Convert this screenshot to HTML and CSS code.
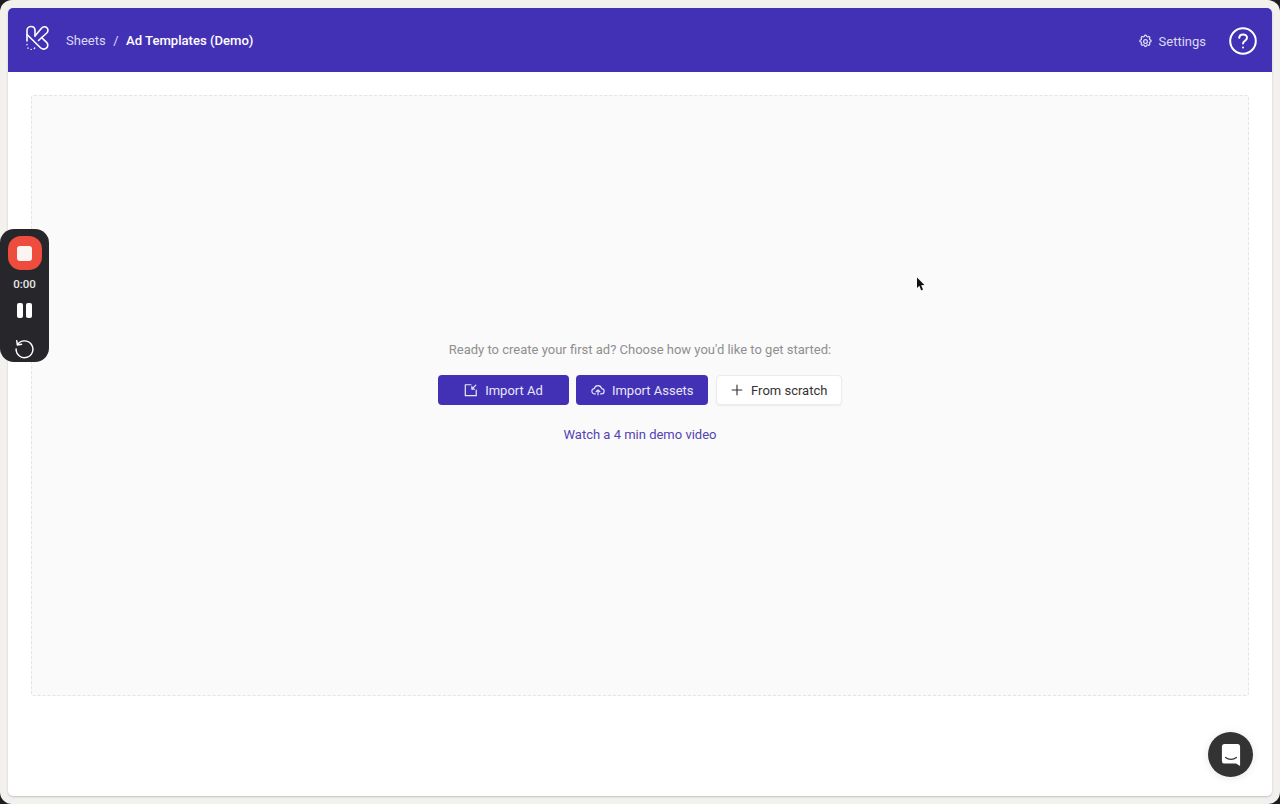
FILE: index.html
```html
<!DOCTYPE html>
<html>

<head>
    <meta charset="utf-8">
    <title>Ad Templates (Demo)</title>
    <link rel="stylesheet" href="styles.css">
</head>

<body>
    <div class="frame">
        <div class="window">
            <header class="topbar">
                <div class="topbar-left">
                    <svg class="logo" viewBox="0 0 24 26" fill="none" stroke="#fff" stroke-width="1.6" stroke-linecap="round" stroke-linejoin="round">
                        <path d="M2 16V5.5C2 3 4 1.5 6 1.5C8.5 1.5 10 3.2 10 5.5V11"/>
                        <path d="M10 11L16.5 3.2C18 1.6 20.5 1.4 22 2.8C23.4 4.2 23.2 6.6 21.8 8L13.5 15.5"/>
                        <path d="M2 9.5L15.5 22.8C17 24.4 19.8 24.6 21.4 23.2C23.2 21.6 23.2 19 21.6 17.4L16.5 12.5"/>
                        <path d="M2 19.5v.3M3 23v.3M6 24.3h.3M9.3 23.5l.4-.5" stroke-width="1.3"/>
                    </svg>
                    <nav class="crumbs">
                        <span>Sheets</span>
                        <span class="crumb-sep">/</span>
                        <strong>Ad Templates (Demo)</strong>
                    </nav>
                </div>
                <div class="topbar-right">
                    <a class="settings-link">
                        <svg class="settings-icon" viewBox="0 0 24 24" fill="none" stroke="currentColor" stroke-width="2" stroke-linecap="round" stroke-linejoin="round">
                            <path d="M10.3 3.2c.4-1.7 3-1.7 3.4 0a1.7 1.7 0 0 0 2.6 1.1c1.5-.9 3.3.8 2.4 2.4a1.7 1.7 0 0 0 1 2.6c1.8.4 1.8 3 0 3.4a1.7 1.7 0 0 0-1 2.6c.9 1.5-.9 3.3-2.4 2.4a1.7 1.7 0 0 0-2.6 1c-.4 1.8-3 1.8-3.4 0a1.7 1.7 0 0 0-2.6-1c-1.5.9-3.3-.9-2.4-2.4a1.7 1.7 0 0 0-1-2.6c-1.8-.4-1.8-3 0-3.4a1.7 1.7 0 0 0 1-2.6c-.9-1.6.9-3.3 2.4-2.4a1.7 1.7 0 0 0 2.6-1.1z"/>
                            <circle cx="12" cy="12" r="3"/>
                        </svg>
                        Settings
                    </a>
                    <svg class="help-icon" viewBox="0 0 28 28" fill="none" stroke="#fff" stroke-width="2" stroke-linecap="round">
                        <circle cx="14" cy="14" r="12.8"/>
                        <path d="M10.2 10.8C10.4 8.6 12 7.4 14 7.4C16.2 7.4 18 8.8 18 10.8C18 13.6 14 13.8 14 16.6"/>
                        <path d="M14 20.4v.2"/>
                    </svg>
                </div>
            </header>

            <main class="content">
                <section class="dropzone">
                    <p class="prompt">Ready to create your first ad? Choose how you'd like to get started:</p>
                    <div class="actions">
                        <button class="btn btn-primary btn-ad">
                            <svg class="btn-icon" viewBox="0 0 16 16" fill="none" stroke="currentColor" stroke-width="1.4" stroke-linecap="round" stroke-linejoin="round">
                                <path d="M8 2H1.5v12.5H14V8"/>
                                <path d="M13.5 2.5L9 7M9 4.2V7H11.8"/>
                            </svg>
                            Import Ad
                        </button>
                        <button class="btn btn-primary btn-assets">
                            <svg class="btn-icon" viewBox="0 0 16 16" fill="none" stroke="currentColor" stroke-width="1.3" stroke-linecap="round" stroke-linejoin="round">
                                <path d="M5 12.5H4.2C2.4 12.5 1 11.1 1 9.4C1 7.8 2.2 6.5 3.8 6.4C4.3 4.4 6 3 8 3C10 3 11.7 4.4 12.2 6.4C13.8 6.5 15 7.8 15 9.4C15 11.1 13.6 12.5 11.8 12.5H11"/>
                                <path d="M8 13.5V8M5.8 10L8 7.8L10.2 10"/>
                            </svg>
                            Import Assets
                        </button>
                        <button class="btn btn-plain">
                            <svg class="btn-icon" viewBox="0 0 16 16" fill="none" stroke="currentColor" stroke-width="1.3" stroke-linecap="round">
                                <path d="M8 2.5v11M2.5 8h11"/>
                            </svg>
                            From scratch
                        </button>
                    </div>
                    <a class="demo-link">Watch a 4 min demo video</a>
                </section>
            </main>
        </div>
    </div>

    <div class="recorder">
        <div class="rec-stop"><span></span></div>
        <div class="rec-time">0:00</div>
        <div class="rec-pause"><span></span><span></span></div>
        <svg class="rec-restart" viewBox="0 0 20 20" fill="none" stroke="#fff" stroke-width="1.4" stroke-linecap="round" stroke-linejoin="round">
            <path d="M3.4 6.2A8 8 0 1 1 2 10.5"/>
            <path d="M2.6 2.6L3.2 6.6L7.2 6"/>
        </svg>
    </div>

    <svg class="cursor" viewBox="0 0 10 15">
        <path d="M1 0.5V11L3.4 8.8L5.2 13.4L7 12.6L5.1 8.2L8.4 8Z" fill="#111"/>
    </svg>

    <div class="chat-bubble">
        <svg viewBox="0 0 22 24" preserveAspectRatio="none">
            <path d="M3.5 1H18.5A2.5 2.5 0 0 1 21 3.5V23L16.5 20.5H3.5A2.5 2.5 0 0 1 1 18V3.5A2.5 2.5 0 0 1 3.5 1Z" fill="#fff"/>
            <path d="M5 14.5C8.5 17 13.5 17 17 14.5" fill="none" stroke="#333" stroke-width="1.3" stroke-linecap="round"/>
        </svg>
    </div>
</body>

</html>
```

FILE: styles.css
```css
* {
    box-sizing: border-box;
}

html,
body {
    margin: 0;
    height: 100%;
    overflow: hidden;
    background-color: #1d1d1f;
    font-family: Roboto, "Liberation Sans", sans-serif;
}

.frame {
    height: 100%;
    padding: 8px;
    background-color: #f2f1ed;
    border-radius: 12px;
}

.window {
    display: flex;
    flex-direction: column;
    height: 100%;
    background-color: white;
    border-radius: 5px;
    overflow: hidden;
    box-shadow: 0 1px 2px rgba(0, 0, 0, 0.2);
}

.topbar {
    display: flex;
    justify-content: space-between;
    align-items: center;
    flex: none;
    height: 64px;
    padding: 0 15px 0 17px;
    background-color: #4331b5;
    color: white;
}

.topbar-left {
    display: flex;
    align-items: center;
    gap: 17px;
}

.logo {
    width: 24px;
    height: 26px;
    margin-top: -4px;
}

.crumbs {
    display: flex;
    gap: 7.5px;
    margin-top: 1px;
    font-size: 13px;
    color: #dcd9f3;
}

.crumbs strong {
    font-size: 13.1px;
    font-weight: 500;
    color: white;
}

.topbar-right {
    display: flex;
    align-items: center;
    gap: 23px;
    margin-top: 2px;
}

.settings-link {
    display: flex;
    align-items: center;
    gap: 6px;
    font-size: 13px;
    color: #dcd9f3;
}

.settings-icon {
    width: 15px;
    height: 15px;
    margin-left: -1px;
}

.help-icon {
    width: 28px;
    height: 28px;
}

.content {
    flex: 1;
    padding: 23px 23px 100px;
}

.dropzone {
    display: flex;
    flex-direction: column;
    align-items: center;
    justify-content: center;
    height: 601px;
    padding-bottom: 6px;
    background-color: #fafafa;
    border: 1px dashed #e4e4e4;
    border-radius: 3px;
}

.prompt {
    margin: 0 0 16px;
    font-size: 13px;
    line-height: 18px;
    color: #8f8f8f;
}

.actions {
    display: flex;
    gap: 7.5px;
    margin-bottom: 21px;
}

.btn {
    display: flex;
    align-items: center;
    justify-content: center;
    gap: 7px;
    height: 30px;
    border-radius: 4px;
    border: none;
    font-family: inherit;
    font-size: 13px;
    cursor: pointer;
}

.btn-primary {
    background-color: #4331b5;
    color: #e8e6f8;
}

.btn-ad {
    width: 130.5px;
}

.btn-assets {
    width: 132px;
}

.btn-plain {
    width: 126px;
    background-color: white;
    border: 1px solid #ececec;
    box-shadow: 0 1px 2px rgba(0, 0, 0, 0.06);
    color: #333;
}

.btn-icon {
    width: 14px;
    height: 14px;
}

.demo-link {
    font-size: 13px;
    line-height: 18px;
    color: #5443b4;
}

.recorder {
    position: absolute;
    top: 229px;
    left: 0;
    display: flex;
    flex-direction: column;
    align-items: center;
    width: 49px;
    height: 133px;
    padding-top: 7px;
    background-color: #26262b;
    border-radius: 14px;
}

.rec-stop {
    display: flex;
    align-items: center;
    justify-content: center;
    width: 34px;
    height: 34px;
    background-color: #ee4c3c;
    border-radius: 13px;
}

.rec-stop span {
    width: 15px;
    height: 15px;
    background-color: #fdf3f1;
    border-radius: 3px;
}

.rec-time {
    margin-top: 8px;
    font-size: 11.5px;
    font-weight: 500;
    line-height: 13px;
    color: #e6e6e6;
}

.rec-pause {
    display: flex;
    gap: 3px;
    margin-top: 12px;
}

.rec-pause span {
    width: 6px;
    height: 15px;
    background-color: white;
    border-radius: 2px;
}

.rec-restart {
    width: 21px;
    height: 21px;
    margin-top: 20px;
}

.cursor {
    position: absolute;
    top: 277px;
    left: 916px;
    width: 10px;
    height: 15px;
}

.chat-bubble {
    position: absolute;
    top: 732px;
    left: 1208px;
    display: flex;
    align-items: center;
    justify-content: center;
    width: 45px;
    height: 45px;
    background-color: #333;
    border-radius: 50%;
    box-shadow: 0 1px 8px rgba(0, 0, 0, 0.1);
}

.chat-bubble svg {
    width: 20px;
    height: 24px;
}
```
